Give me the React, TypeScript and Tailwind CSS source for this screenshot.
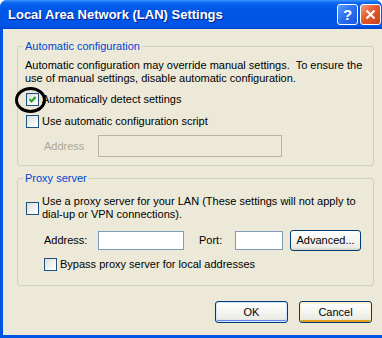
import React from "react";

const Cb = ({ checked }: { checked?: boolean }) => (
  <span className="w-[13px] h-[13px] shrink-0 border border-[#1C5180] bg-[linear-gradient(135deg,#DCDCD7_0%,#F4F4F0_60%,#FFFFFF_100%)] flex items-center justify-center">
    {checked && (
      <svg width="11" height="11" viewBox="0 0 11 11">
        <path d="M2.5 5.2 L4.5 7.5 L8.5 3" fill="none" stroke="#21A121" strokeWidth="2" />
      </svg>
    )}
  </span>
);

const Btn = ({ children, variant }: { children: React.ReactNode; variant: "ok" | "cancel" | "plain" }) => {
  const ring =
    variant === "ok"
      ? "shadow-[inset_0_0_0_1px_#CEE7FF,inset_0_-1px_0_1px_#6982EE]"
      : variant === "cancel"
      ? "shadow-[inset_0_1px_0_1px_#FFF0CF,inset_0_-1px_0_1px_#E5A01A]"
      : "";
  return (
    <div
      className={`flex items-center justify-center border border-[#003C74] rounded-[3px] bg-[linear-gradient(180deg,#FFFFFF_0%,#F4F4F0_50%,#ECEBE6_85%,#D6D0C5_100%)] text-black text-[11px] ${ring}`}
    >
      {children}
    </div>
  );
};

export default function App() {
  return (
    <div className="w-[382px] h-[338px] flex flex-col bg-[#0055E5] rounded-t-[7px] overflow-hidden font-['Liberation_Sans',Arial,sans-serif] text-[11px] leading-[13px] text-black">
      {/* title bar */}
      <div className="h-[29px] shrink-0 flex items-center pl-[8px] pr-[1px] bg-[linear-gradient(180deg,#3D95FF_0%,#0A66F0_10%,#0058E8_30%,#0054E3_60%,#0056EA_88%,#0043CC_100%)]">
        <span className="flex-1 text-white font-bold text-[13px] leading-[16px] mt-[1px] [text-shadow:1px_1px_#0A1E8C]">
          Local Area Network (LAN) Settings
        </span>
        <div className="flex gap-[2px]">
          <div className="w-[21px] h-[21px] rounded-[3px] border border-white bg-[linear-gradient(135deg,#5A9CFF_0%,#2C6DF0_50%,#1A55E0_100%)] flex items-center justify-center text-white font-bold text-[15px] leading-none">
            ?
          </div>
          <div className="w-[21px] h-[21px] rounded-[3px] border border-white bg-[linear-gradient(135deg,#F39A7C_0%,#E2592E_45%,#C8401C_100%)] flex items-center justify-center">
            <svg width="13" height="13" viewBox="0 0 13 13">
              <path d="M2.5 2.5 L10.5 10.5 M10.5 2.5 L2.5 10.5" stroke="white" strokeWidth="2.2" />
            </svg>
          </div>
        </div>
      </div>

      {/* body */}
      <div className="flex-1 ml-[3px] mb-[3px] bg-[#ECE9D8] pl-[14px] pt-[11px] flex flex-col">
        <fieldset className="w-[357px] border border-[#D0D0BF] rounded-[3px] pl-[7px] pr-[6px] pb-[8px]">
          <legend className="text-[#0046D5] px-[2px] -ml-[2px] leading-[13px]">Automatic configuration</legend>
          <div className="mt-[6px] whitespace-pre">
            <div>Automatic configuration may override manual settings.  To ensure the</div>
            <div>use of manual settings, disable automatic configuration.</div>
          </div>
          <div className="mt-[8px] flex items-center gap-[3px] pl-[1px] h-[13px]">
            <span className="relative">
              <Cb checked />
              <span className="absolute left-[-11px] top-[-6px] w-[31px] h-[26px] rounded-[50%] border-[3px] border-black" />
            </span>
            <span>Automatically detect settings</span>
          </div>
          <div className="mt-[9px] flex items-center gap-[3px] pl-[1px] h-[13px]">
            <Cb />
            <span>Use automatic configuration script</span>
          </div>
          <div className="mt-[7px] flex items-center h-[22px] pl-[19px]">
            <span className="w-[54px] text-[#ACA899]">Address</span>
            <div className="w-[184px] h-[22px] border border-[#B5B2A5]" />
          </div>
        </fieldset>

        <fieldset className="mt-[6px] w-[357px] border border-[#D0D0BF] rounded-[3px] pl-[7px] pr-[6px] pb-[14px]">
          <legend className="text-[#0046D5] px-[2px] -ml-[2px] leading-[13px]">Proxy server</legend>
          <div className="mt-[10px] flex items-center gap-[3px] pl-[1px]">
            <Cb />
            <div>
              <div>Use a proxy server for your LAN (These settings will not apply to</div>
              <div>dial-up or VPN connections).</div>
            </div>
          </div>
          <div className="mt-[9px] flex items-center h-[21px] pl-[19px]">
            <span className="w-[54px]">Address:</span>
            <div className="w-[86px] h-[19px] border border-[#7F9DB9] bg-white" />
            <span className="ml-[15px] w-[36px]">Port:</span>
            <div className="w-[48px] h-[19px] border border-[#7F9DB9] bg-white" />
            <div className="ml-[7px] w-[71px] h-[21px] flex">
              <div className="flex-1 flex">
                <div className="flex-1 [&>div]:h-full [&>div]:w-full flex">
                  <Btn variant="plain">Advanced...</Btn>
                </div>
              </div>
            </div>
          </div>
          <div className="mt-[7px] flex items-center gap-[3px] pl-[19px] h-[13px]">
            <Cb />
            <span>Bypass proxy server for local addresses</span>
          </div>
        </fieldset>

        <div className="mt-[15px] w-[357px] pr-[2px] flex justify-end gap-[11px]">
          <div className="w-[73px] h-[22px] flex [&>div]:flex-1">
            <Btn variant="ok">OK</Btn>
          </div>
          <div className="w-[73px] h-[22px] flex [&>div]:flex-1">
            <Btn variant="cancel">Cancel</Btn>
          </div>
        </div>
      </div>
    </div>
  );
}
